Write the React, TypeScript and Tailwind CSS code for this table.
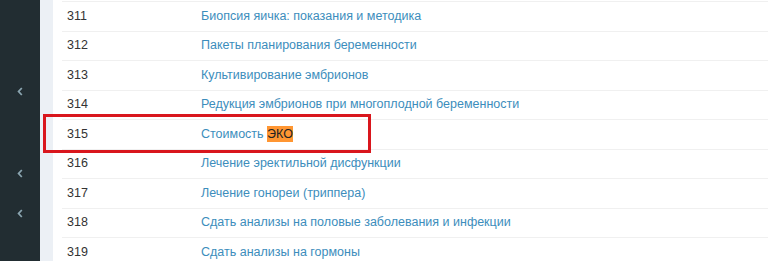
import React from 'react';

const rows: { id: number; title: string; mark?: string }[] = [
  { id: 311, title: 'Биопсия яичка: показания и методика' },
  { id: 312, title: 'Пакеты планирования беременности' },
  { id: 313, title: 'Культивирование эмбрионов' },
  { id: 314, title: 'Редукция эмбрионов при многоплодной беременности' },
  { id: 315, title: 'Стоимость ', mark: 'ЭКО' },
  { id: 316, title: 'Лечение эректильной дисфункции' },
  { id: 317, title: 'Лечение гонореи (триппера)' },
  { id: 318, title: 'Сдать анализы на половые заболевания и инфекции' },
  { id: 319, title: 'Сдать анализы на гормоны' },
];

function Chevron() {
  return (
    <svg width="6" height="9" viewBox="0 0 6 9" className="text-[#8aa4af]">
      <path d="M4.8 1 L1.6 4.5 L4.8 8" fill="none" stroke="currentColor" strokeWidth={1.8} />
    </svg>
  );
}

export default function App() {
  return (
    <div className="flex w-[768px] h-[261px] overflow-hidden bg-white font-['Liberation_Sans',Arial,sans-serif] text-[12.5px]">
      {/* sidebar */}
      <div className="w-[40px] shrink-0 bg-[#222d32] relative">
        <div className="absolute left-[17px] top-[87px]"><Chevron /></div>
        <div className="absolute left-[17px] top-[169px]"><Chevron /></div>
        <div className="absolute left-[17px] top-[209px]"><Chevron /></div>
      </div>
      <div className="w-[13px] shrink-0 bg-[#ecf0f5]" />

      {/* table */}
      <div className="flex-1 pl-[9px] pt-[1px] relative">
        {rows.map((r) => (
          <div key={r.id} className="flex items-center h-[29.5px] border-t border-[#f0f0f0]">
            <div className="w-[139px] pl-[5px] text-[#333]">{r.id}</div>
            <div className="text-[#3c8dbc]">
              {r.title}
              {r.mark && <span className="bg-[#ff9632] text-[#222] py-[1px]">{r.mark}</span>}
            </div>
          </div>
        ))}
      </div>

      {/* highlight frame */}
      <div className="absolute left-[43px] top-[114px] w-[328px] h-[39px] border-[3px] border-[#d9161d] pointer-events-none" />
    </div>
  );
}
